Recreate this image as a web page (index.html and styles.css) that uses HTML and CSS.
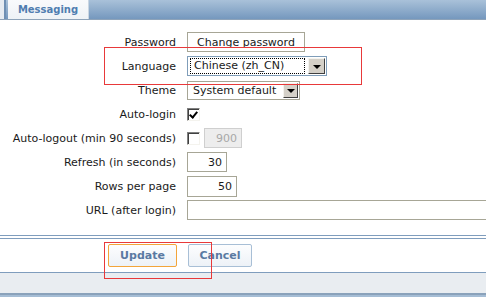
FILE: index.html
```html
<!DOCTYPE html>
<html lang="en">
<head>
<meta charset="UTF-8">
<meta name="viewport" content="width=device-width, initial-scale=1.0">
<title>User profile</title>
<link rel="stylesheet" href="styles.css">
</head>
<body>

<div class="header">
  <div class="prev-tab"></div>
  <div class="tab">Messaging</div>
</div>

<form class="form">
  <label class="lbl">Password</label>
  <div class="field"><button type="button" class="plain-btn">Change password</button></div>

  <label class="lbl">Language</label>
  <div class="field">
    <div class="select select-lang focused">
      <span class="value"><span class="focus-rect">Chinese (zh_CN)</span></span>
      <span class="arrow"></span>
    </div>
  </div>

  <label class="lbl">Theme</label>
  <div class="field">
    <div class="select select-theme">
      <span class="value">System default</span>
      <span class="arrow"></span>
    </div>
  </div>

  <label class="lbl">Auto-login</label>
  <div class="field"><span class="check checked"></span></div>

  <label class="lbl">Auto-logout (min 90 seconds)</label>
  <div class="field">
    <span class="check"></span>
    <input type="text" class="num num-disabled" value="900" disabled>
  </div>

  <label class="lbl">Refresh (in seconds)</label>
  <div class="field"><input type="text" class="num num-refresh" value="30"></div>

  <label class="lbl">Rows per page</label>
  <div class="field"><input type="text" class="num num-rows" value="50"></div>

  <label class="lbl">URL (after login)</label>
  <div class="field"><input type="text" class="url"></div>
</form>

<div class="footer">
  <button type="button" class="btn btn-update">Update</button>
  <button type="button" class="btn btn-cancel">Cancel</button>
</div>
<div class="footer-bar"></div>
<div class="bottom"></div>

<!-- annotation boxes drawn over the screenshot -->
<div class="mark mark-lang"></div>
<div class="mark mark-update"></div>

</body>
</html>
```

FILE: styles.css
```css
body {
  margin: 0;
  padding: 0;
  background: #fff;
  font-family: "DejaVu Sans", Verdana, sans-serif;
  font-size: 11px;
  color: #1a1a1a;
  overflow: hidden;
  height: 297px;
  position: relative;
}
.header {
  display: flex;
  height: 19px;
  background: linear-gradient(#a9c1d9, #7598be);
  border-bottom: 1px solid #8ea3b9;
}
.prev-tab {
  width: 4px;
  background: #e6ebf1;
  border-right: 2px solid #6f8fb3;
}
.tab {
  margin-left: 2px;
  width: 80px;
  background: linear-gradient(#f9fafc, #eef2f6);
  border-right: 1px solid #c9d5e2;
  color: #4f7db0;
  font-weight: bold;
  font-size: 10px;
  text-align: center;
  line-height: 20px;
}
.form {
  display: grid;
  grid-template-columns: 176px 1fr;
  grid-auto-rows: 24px;
  column-gap: 11px;
  align-items: center;
  padding: 10px 0 13px;
  border-bottom: 1px solid #7f9dbd;
}
.lbl {
  text-align: right;
  white-space: nowrap;
}
.field {
  display: flex;
  align-items: center;
  gap: 4px;
  white-space: nowrap;
}
.plain-btn {
  font: inherit;
  color: #1a1a1a;
  height: 20px;
  width: 118px;
  padding: 0;
  background: #fff;
  border: 1px solid #a7a696;
}
.select {
  display: flex;
  align-items: center;
  background: #fff;
  box-sizing: border-box;
  padding: 1px;
}
.select-lang {
  width: 140px;
  height: 20px;
  border: 1px solid #7f9db9;
}
.select-theme {
  width: 113px;
  height: 19px;
  border: 1px solid #a7a696;
}
.select .value {
  flex: 1;
  padding-left: 4px;
}
.select-lang .value {
  padding-left: 1px;
}
.focus-rect {
  display: block;
  border: 1px dotted #000;
  padding: 0 0 1px 3px;
  width: 110px;
  line-height: 13px;
}
.arrow {
  box-sizing: border-box;
  width: 17px;
  height: 100%;
  background: #d4d0c8;
  border: 1px solid;
  border-color: #f4f3ee #404040 #404040 #f4f3ee;
  display: flex;
  align-items: center;
  justify-content: center;
}
.select-theme .arrow {
  width: 15px;
}
.arrow::after {
  content: "";
  border-left: 4px solid transparent;
  border-right: 4px solid transparent;
  border-top: 4px solid #000;
  margin-top: 1px;
}
.check {
  width: 13px;
  height: 13px;
  box-sizing: border-box;
  border: 1px solid;
  border-color: #808080 #f4f3ee #f4f3ee #808080;
  box-shadow: inset 1px 1px 0 #404040;
  background: #fff;
  position: relative;
}
.check.checked::after {
  content: "";
  position: absolute;
  left: 3px;
  top: 1px;
  width: 3px;
  height: 6px;
  border: solid #000;
  border-width: 0 2px 2px 0;
  transform: rotate(40deg);
}
.num {
  font: inherit;
  color: #1a1a1a;
  text-align: right;
  box-sizing: border-box;
  padding: 0 4px 0 0;
  border: 1px solid #a7a696;
  background: #fff;
}
.num-disabled {
  width: 38px;
  height: 20px;
  border-color: #cfcfcf;
  background: #ededed;
  color: #a8a8a8;
}
.num-refresh {
  width: 40px;
  height: 20px;
}
.num-rows {
  width: 50px;
  height: 21px;
}
.url {
  font: inherit;
  box-sizing: border-box;
  width: 320px;
  height: 20px;
  border: 1px solid #a7a696;
  background: #fff;
}
.footer {
  margin-top: 2px;
  border-top: 1px solid #7f9dbd;
  height: 33px;
  box-sizing: content-box;
  padding: 5px 0 0 108px;
  box-sizing: border-box;
  height: 34px;
  display: flex;
  gap: 11px;
  align-items: flex-start;
}
.btn {
  font: inherit;
  font-weight: bold;
  color: #5a7aa2;
  height: 23px;
  padding: 0;
  border-radius: 2px;
  background: linear-gradient(#fdfdfe, #edf2f7);
  border: 1px solid #a8bfd6;
}
.btn-update {
  width: 69px;
  border-color: #f3a53a;
}
.btn-cancel {
  width: 64px;
}
.footer-bar {
  height: 20px;
  background: #e9edf1;
  border-top: 1px solid #7f9dbd;
  border-bottom: 2px solid #8aa2bb;
}
.bottom {
  height: 10px;
  background: #a5bdd5;
}
.mark {
  position: absolute;
  border: 1px solid #e8393a;
}
.mark-lang {
  left: 104px;
  top: 47px;
  width: 256px;
  height: 36px;
}
.mark-update {
  left: 104px;
  top: 242px;
  width: 106px;
  height: 35px;
}
```
